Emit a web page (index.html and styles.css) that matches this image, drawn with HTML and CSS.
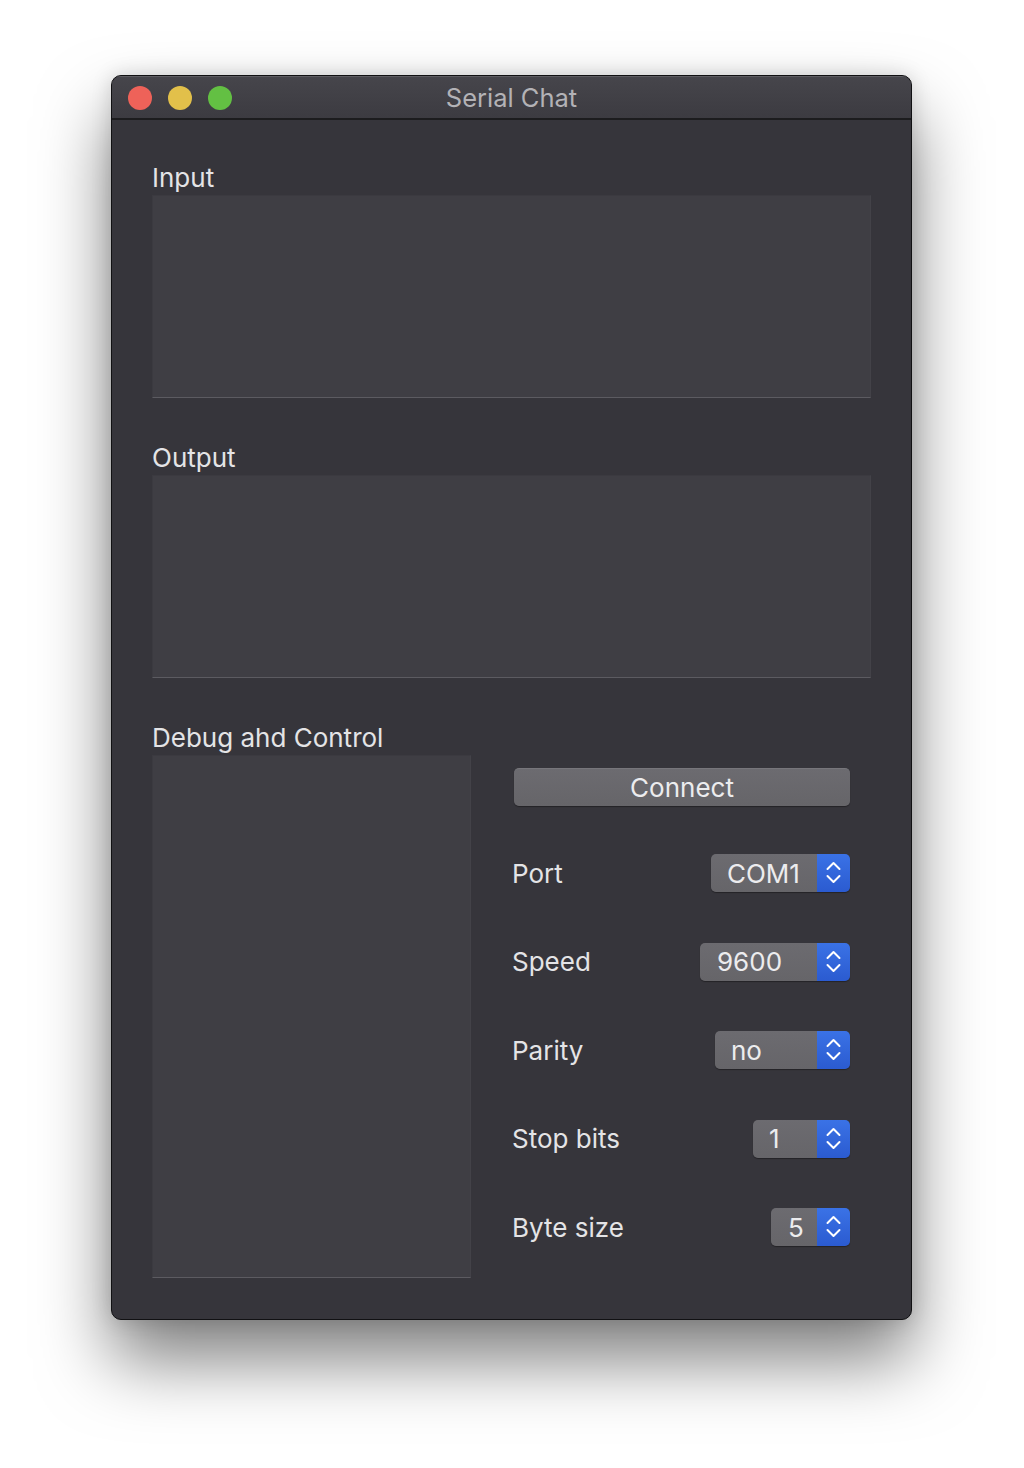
FILE: index.html
```html
<!DOCTYPE html>
<html>
<head>
<meta charset="utf-8">
<link rel="stylesheet" href="styles.css">
</head>
<body>
<div class="window">
  <div class="titlebar">
    <div class="lights">
      <span class="light red"></span>
      <span class="light yellow"></span>
      <span class="light green"></span>
    </div>
    <div class="title">Serial Chat</div>
  </div>
  <div class="content">
    <div class="label">Input</div>
    <div class="field wide"></div>
    <div class="label gap">Output</div>
    <div class="field wide"></div>
    <div class="label gap">Debug ahd Control</div>
    <div class="bottom">
      <div class="field debug"></div>
      <div class="controls">
        <div class="button">Connect</div>
        <div class="row"><span class="rlabel">Port</span>
          <div class="stepper"><span class="val w-port">COM1</span><span class="arrows"><svg width="33" height="38" viewBox="0 0 33 38"><path d="M10.5 15 L16.5 9 L22.5 15 M10.5 22 L16.5 28 L22.5 22" fill="none" stroke="#fff" stroke-width="2" stroke-linecap="round" stroke-linejoin="round"/></svg></span></div>
        </div>
        <div class="row"><span class="rlabel">Speed</span>
          <div class="stepper"><span class="val w-speed">9600</span><span class="arrows"><svg width="33" height="38" viewBox="0 0 33 38"><path d="M10.5 15 L16.5 9 L22.5 15 M10.5 22 L16.5 28 L22.5 22" fill="none" stroke="#fff" stroke-width="2" stroke-linecap="round" stroke-linejoin="round"/></svg></span></div>
        </div>
        <div class="row"><span class="rlabel">Parity</span>
          <div class="stepper"><span class="val w-parity">no</span><span class="arrows"><svg width="33" height="38" viewBox="0 0 33 38"><path d="M10.5 15 L16.5 9 L22.5 15 M10.5 22 L16.5 28 L22.5 22" fill="none" stroke="#fff" stroke-width="2" stroke-linecap="round" stroke-linejoin="round"/></svg></span></div>
        </div>
        <div class="row"><span class="rlabel">Stop bits</span>
          <div class="stepper"><span class="val w-stop">1</span><span class="arrows"><svg width="33" height="38" viewBox="0 0 33 38"><path d="M10.5 15 L16.5 9 L22.5 15 M10.5 22 L16.5 28 L22.5 22" fill="none" stroke="#fff" stroke-width="2" stroke-linecap="round" stroke-linejoin="round"/></svg></span></div>
        </div>
        <div class="row"><span class="rlabel">Byte size</span>
          <div class="stepper"><span class="val w-byte">5</span><span class="arrows"><svg width="33" height="38" viewBox="0 0 33 38"><path d="M10.5 15 L16.5 9 L22.5 15 M10.5 22 L16.5 28 L22.5 22" fill="none" stroke="#fff" stroke-width="2" stroke-linecap="round" stroke-linejoin="round"/></svg></span></div>
        </div>
      </div>
    </div>
  </div>
</div>
</body>
</html>
```

FILE: styles.css
```css
html, body {
  margin: 0;
  padding: 0;
  background: #ffffff;
}
body {
  width: 1024px;
  height: 1468px;
  overflow: hidden;
  font-family: Inter, "Liberation Sans", sans-serif;
}
.window {
  margin: 75px 0 0 111px;
  width: 801px;
  height: 1245px;
  box-sizing: border-box;
  background: #36353b;
  border: 1px solid #111113;
  border-radius: 10px;
  box-shadow: 0 40px 70px rgba(0, 0, 0, 0.5), 0 0 20px rgba(0, 0, 0, 0.15);
  overflow: hidden;
  display: flex;
  flex-direction: column;
}
.titlebar {
  height: 44px;
  flex: none;
  background: linear-gradient(#46454b, #3c3b41);
  border-top: 1px solid #5e5d62;
  border-bottom: 2px solid #1c1c1e;
  box-sizing: border-box;
  display: flex;
  align-items: center;
  position: relative;
}
.lights {
  display: flex;
  gap: 16px;
  padding-left: 16px;
}
.light {
  width: 24px;
  height: 24px;
  border-radius: 50%;
  display: block;
}
.red { background: #ee6259; }
.yellow { background: #e2c04a; }
.green { background: #63c043; }
.title {
  position: absolute;
  left: 0;
  right: 0;
  top: 0;
  bottom: 0;
  display: flex;
  align-items: center;
  justify-content: center;
  color: #b3b2b6;
  font-size: 25.5px;
}
.content {
  padding: 43px 40px 0 40px;
  display: flex;
  flex-direction: column;
}
.label {
  height: 26px;
  line-height: 26px;
  padding-top: 2px;
  padding-bottom: 4px;
  color: #e4e4e6;
  font-size: 26px;
}
.label.gap {
  margin-top: 45px;
}
.field {
  background: #3f3e44;
  border-top: 1px solid #3b3a40;
  border-left: 1px solid #3b3a40;
  border-right: 1px solid #434248;
  border-bottom: 1px solid #5c5b61;
  box-sizing: border-box;
}
.wide {
  width: 719px;
  height: 203px;
}
.bottom {
  display: flex;
}
.debug {
  width: 319px;
  height: 523px;
  flex: none;
}
.controls {
  margin-left: 41px;
  width: 338px;
  padding-top: 13px;
  display: flex;
  flex-direction: column;
}
.button {
  margin-left: 2px;
  height: 38px;
  border-radius: 5px;
  background: linear-gradient(#6c6b70, #666569);
  border-top: 1px solid #77767b;
  box-sizing: border-box;
  box-shadow: 0 1px 1px rgba(0, 0, 0, 0.35);
  color: #ececee;
  font-size: 26px;
  display: flex;
  align-items: center;
  justify-content: center;
}
.row {
  height: 38px;
  margin-top: 50.5px;
  display: flex;
  align-items: center;
  justify-content: space-between;
}
.button + .row {
  margin-top: 48px;
}
.rlabel {
  color: #e4e4e6;
  font-size: 26px;
}
.stepper {
  height: 38px;
  display: flex;
  border-radius: 5px;
  overflow: hidden;
  box-shadow: 0 1px 1px rgba(0, 0, 0, 0.35);
}
.val {
  background: linear-gradient(#6c6b70, #666569);
  color: #ececee;
  font-size: 26px;
  padding-left: 16px;
  box-sizing: border-box;
  display: flex;
  align-items: center;
}
.w-port { width: 106px; }
.w-speed { width: 117px; padding-left: 17px; }
.w-parity { width: 102px; }
.w-stop { width: 64px; }
.w-byte { width: 46px; padding-left: 17px; }
.arrows {
  width: 33px;
  background: linear-gradient(#3a72e6, #2b5bd0);
  display: flex;
}
```
